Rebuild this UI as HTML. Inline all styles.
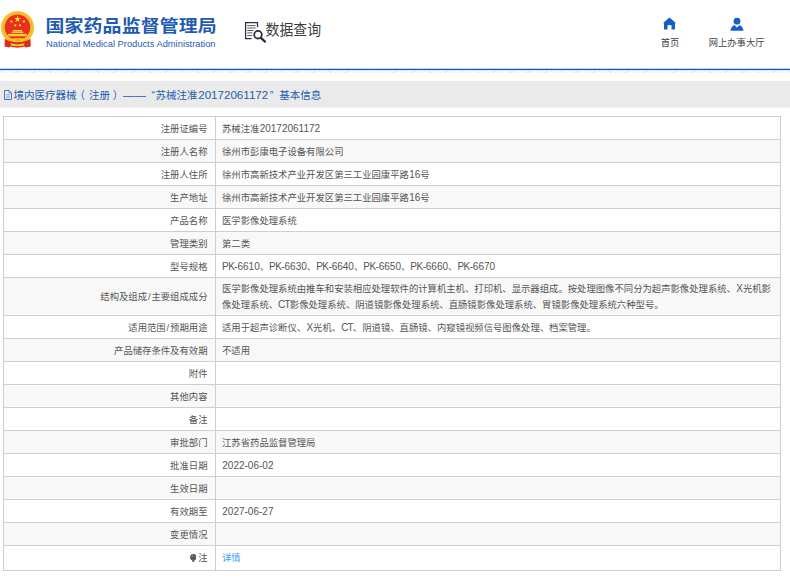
<!DOCTYPE html>
<html lang="zh-CN">
<head>
<meta charset="utf-8">
<title>国家药品监督管理局 数据查询</title>
<style>
html,body{margin:0;padding:0;background:#fff;}
body{width:790px;height:579px;position:relative;overflow:hidden;
  font-family:"Liberation Sans","Noto Sans CJK SC",sans-serif;color:#444;}
.abs{position:absolute;white-space:nowrap;}
#logo{left:0px;top:8px;width:36px;height:40px;}
#title{left:45.5px;top:13px;font-size:18.9px;font-weight:bold;color:#1f5bb0;line-height:26px;letter-spacing:0.15px;transform:scaleY(0.88);transform-origin:0 20.3px;}
#sub{left:46px;top:38px;font-size:9.33px;color:#1f5bb0;line-height:12px;transform:scaleY(1.06);transform-origin:0 9.1px;}
#qicon{left:244px;top:21px;width:24px;height:24px;}
#qtext{left:265.5px;top:20px;font-size:13.9px;color:#3c3c3c;line-height:20px;transform:scaleY(1.06);transform-origin:0 10.4px;}
#home{left:663.4px;top:17.3px;width:13px;height:13px;}
#homet{left:650px;width:40px;text-align:center;top:36.6px;font-size:9.35px;color:#444;line-height:12px;}
#user{left:729px;top:16.5px;width:16px;height:15px;}
#usert{left:696.6px;width:80px;text-align:center;top:36.6px;font-size:9.3px;color:#444;line-height:12px;}
#blue{left:0;top:68px;width:790px;height:3px;background:linear-gradient(to bottom,#bdd4ef 0,#bdd4ef 1px,#0c5fc5 1px,#0c5fc5 2px,#dce8f6 2px,#dce8f6 3px);}
#hatch{left:0;top:71px;width:790px;height:2px;
  background:repeating-linear-gradient(135deg,#e4e4e4 0,#e4e4e4 0.8px,#fff 0.8px,#fff 2px);}
#bar{left:0;top:80px;width:790px;height:28px;background:linear-gradient(to bottom,#fafafa 0,#fafafa 1px,#eaeaea 1px,#eaeaea 27px,#eff0f4 27px,#eff0f4 28px);}
#bart{left:13.5px;top:86.7px;font-size:10.5px;color:#1f5bb0;line-height:16px;}
#bart span{display:inline-block;}
#bart .d{font-size:11.6px;}
#b2{margin-left:-1.9px;}#b3{margin-left:3.9px;}#b4{margin-left:2.8px;}
#b5{margin-left:-0.2px;font-size:11.4px;}#b6{margin-left:5.5px;}#b7{margin-left:0.5px;}
#b8{margin-left:0.8px;}#b9{margin-left:1.4px;}#b10{margin-left:6.2px;}
#doc{left:4.2px;top:89.8px;width:8px;height:10px;}
table{position:absolute;left:3px;top:116px;width:778px;border-collapse:collapse;table-layout:fixed;
  font-size:9.35px;color:#555;}
td{border:1px solid #cecece;height:23px;padding:1px 6px 0 6px;line-height:16px;white-space:nowrap;vertical-align:middle;box-sizing:border-box;}
td.l{width:212px;text-align:right;padding-right:7.5px;}
td.v{text-align:left;padding-left:6px;}
tr:nth-child(even) td{background:#f8f8f8;}
tr.tall td{height:38px;}
tr.last td{height:25px;padding-top:0;}
a{color:#3d9bff;text-decoration:none;}
.n{font-size:10px;margin-left:0.3px;}
.bulb{display:inline-block;width:6.6px;height:8.4px;vertical-align:-1.2px;margin-right:2px;}
.sl{padding:0 0.9px;}
.c{font-size:10px;letter-spacing:-0.5px;}
.ct{font-size:10px;letter-spacing:-0.8px;}
</style>
</head>
<body>
<svg id="logo" class="abs" viewBox="0 0 36 40">
  <circle cx="17.5" cy="19.6" r="16.6" fill="#f6c431"/>
  <circle cx="17.5" cy="19.6" r="14.7" fill="none" stroke="#eaa91d" stroke-width="0.6"/>
  <path d="M4.9 30.8 C8 33 12 34.3 17.5 34.3 C23 34.3 27 33 30.4 30.8 L30.8 38.6 L25.6 39.5 L24.4 38.6 C21 40 14 40 10.6 38.6 L9.4 39.5 L4.5 38.6 Z" fill="#e02a1a"/>
  <circle cx="17.5" cy="19.3" r="12.8" fill="#e9301f"/>
  <polygon points="17.5,7.6 18.3,10 20.8,10 18.8,11.5 19.5,13.9 17.5,12.4 15.5,13.9 16.2,11.5 14.2,10 16.7,10" fill="#ffd93b"/>
  <circle cx="11.4" cy="13.6" r="1.15" fill="#ffd93b"/>
  <circle cx="23.9" cy="13.6" r="1.15" fill="#ffd93b"/>
  <circle cx="15.3" cy="17.3" r="1.15" fill="#ffd93b"/>
  <circle cx="20" cy="17.3" r="1.15" fill="#ffd93b"/>
  <path d="M13.3 22 H21.7 L22.6 23.2 H12.4 Z" fill="#ffd93b"/>
  <path d="M12.4 23.6 H22.6 L23.6 24.9 H11.4 Z" fill="#fbd03a"/>
  <rect x="8.2" y="25.8" width="18.6" height="2.5" fill="#fbcb35"/>
  <path d="M7 29.4 C11 32 24 32 28 29.4" fill="none" stroke="#f6c431" stroke-width="1.1"/>
  <ellipse cx="17.8" cy="32" rx="6" ry="2.1" fill="#f6c431"/>
  <ellipse cx="17.8" cy="32" rx="2.8" ry="0.9" fill="#eaa91d"/>
  <path d="M10.5 35.3 C13 36.4 22 36.4 24.4 35.3 L24 37.6 C21.5 38.5 13.5 38.5 11 37.6 Z" fill="#f6c431"/>
  <ellipse cx="17.5" cy="36.9" rx="2.6" ry="0.9" fill="#eaa91d"/>
</svg>
<div id="title" class="abs">国家药品监督管理局</div>
<div id="sub" class="abs">National Medical Products Administration</div>

<svg id="qicon" class="abs" viewBox="0 0 24 24" fill="none">
  <path d="M13.5 6.2 V1.6 H1.6 V17.6 H7.6" stroke="#2f2f48" stroke-width="1.3"/>
  <path d="M3.3 4.6 H11.6 M3.3 7 H11.6 M3.3 9.5 H9.6 M3.3 11.9 H8.4 M3.3 14.5 H8.2" stroke="#5a5a66" stroke-width="1"/>
  <circle cx="14" cy="13.7" r="3.8" stroke="#2a2a40" stroke-width="1.8"/>
  <path d="M16.9 16.9 L21 20.6" stroke="#2a2a40" stroke-width="2.3" stroke-linecap="round"/>
</svg>
<div id="qtext" class="abs">数据查询</div>

<svg id="home" class="abs" viewBox="0 0 13 13">
  <path d="M6.5 0.4 L12.6 5.8 Q12.7 6.6 12 6.6 V12.5 H8.5 V9 Q8.5 8 7.5 8 H5.5 Q4.5 8 4.5 9 V12.5 H1 V6.6 Q0.3 6.6 0.4 5.8 Z" fill="#1560c6"/>
</svg>
<div id="homet" class="abs">首页</div>
<svg id="user" class="abs" viewBox="0 0 16 15">
  <circle cx="8" cy="4.2" r="3.4" fill="#1560c6"/>
  <path d="M1.5 13.8 C1.8 10 4.6 8.3 5.6 8.3 L8 10.6 L10.4 8.3 C11.4 8.3 14.2 10 14.5 13.8 Z" fill="#1560c6"/>
</svg>
<div id="usert" class="abs">网上办事大厅</div>

<div id="blue" class="abs"></div>
<div id="hatch" class="abs"></div>
<div id="bar" class="abs"></div>
<svg id="doc" class="abs" viewBox="0 0 8 10" fill="none" stroke="#2a63b6" stroke-width="0.85">
  <path d="M0.5 0.5 H5 L7.5 3 V9.5 H0.5 Z"/>
  <path d="M5 0.5 V3 H7.5" stroke-width="0.6"/>
  <path d="M2 4.6 H6 M2 6.2 H6 M2 7.8 H6" stroke-width="0.55" stroke="#5d88c8"/>
</svg>
<div id="bart" class="abs"><span id="b1">境内医疗器械</span><span id="b2">（</span><span id="b3">注册</span><span id="b4">）</span><span id="b5">——</span><span id="b6">“</span><span id="b7">苏械注准</span><span id="b8" class="d">20172061172</span><span id="b9">”</span><span id="b10">基本信息</span></div>

<table>
<tr><td class="l">注册证编号</td><td class="v">苏械注准<span class="n">20172061172</span></td></tr>
<tr><td class="l">注册人名称</td><td class="v">徐州市彭康电子设备有限公司</td></tr>
<tr><td class="l">注册人住所</td><td class="v">徐州市高新技术产业开发区第三工业园康平路<span class="n">16</span>号</td></tr>
<tr><td class="l">生产地址</td><td class="v">徐州市高新技术产业开发区第三工业园康平路<span class="n">16</span>号</td></tr>
<tr><td class="l">产品名称</td><td class="v">医学影像处理系统</td></tr>
<tr><td class="l">管理类别</td><td class="v">第二类</td></tr>
<tr><td class="l">型号规格</td><td class="v"><span class="c">PK-</span><span class="n">6610</span>、<span class="c">PK-</span><span class="n">6630</span>、<span class="c">PK-</span><span class="n">6640</span>、<span class="c">PK-</span><span class="n">6650</span>、<span class="c">PK-</span><span class="n">6660</span>、<span class="c">PK-</span><span class="n">6670</span></td></tr>
<tr class="tall"><td class="l">结构及组成<span class="sl">/</span>主要组成成分</td><td class="v">医学影像处理系统由推车和安装相应处理软件的计算机主机、打印机、显示器组成。按处理图像不同分为超声影像处理系统、<span class="n">X</span>光机影<br>像处理系统、<span class="ct">CT</span>影像处理系统、阴道镜影像处理系统、直肠镜影像处理系统、胃镜影像处理系统六种型号。</td></tr>
<tr><td class="l">适用范围<span class="sl">/</span>预期用途</td><td class="v">适用于超声诊断仪、<span class="n">X</span>光机、<span class="ct">CT</span>、阴道镜、直肠镜、内窥镜视频信号图像处理、档案管理。</td></tr>
<tr><td class="l">产品储存条件及有效期</td><td class="v">不适用</td></tr>
<tr><td class="l">附件</td><td class="v"></td></tr>
<tr><td class="l">其他内容</td><td class="v"></td></tr>
<tr><td class="l">备注</td><td class="v"></td></tr>
<tr><td class="l">审批部门</td><td class="v">江苏省药品监督管理局</td></tr>
<tr><td class="l">批准日期</td><td class="v"><span class="n">2022-06-02</span></td></tr>
<tr><td class="l">生效日期</td><td class="v"></td></tr>
<tr><td class="l">有效期至</td><td class="v"><span class="n">2027-06-27</span></td></tr>
<tr><td class="l">变更情况</td><td class="v"></td></tr>
<tr class="last"><td class="l"><svg class="bulb" viewBox="0 0 6.6 8.4"><circle cx="3.3" cy="3.2" r="3.2" fill="#595959"/><path d="M1.9 5.6 H4.7 L4.3 8 H2.3 Z" fill="#6b6b6b"/><circle cx="2.3" cy="2.2" r="0.9" fill="#8d8d8d"/></svg>注</td><td class="v"><a>详情</a></td></tr>
</table>
</body>
</html>
